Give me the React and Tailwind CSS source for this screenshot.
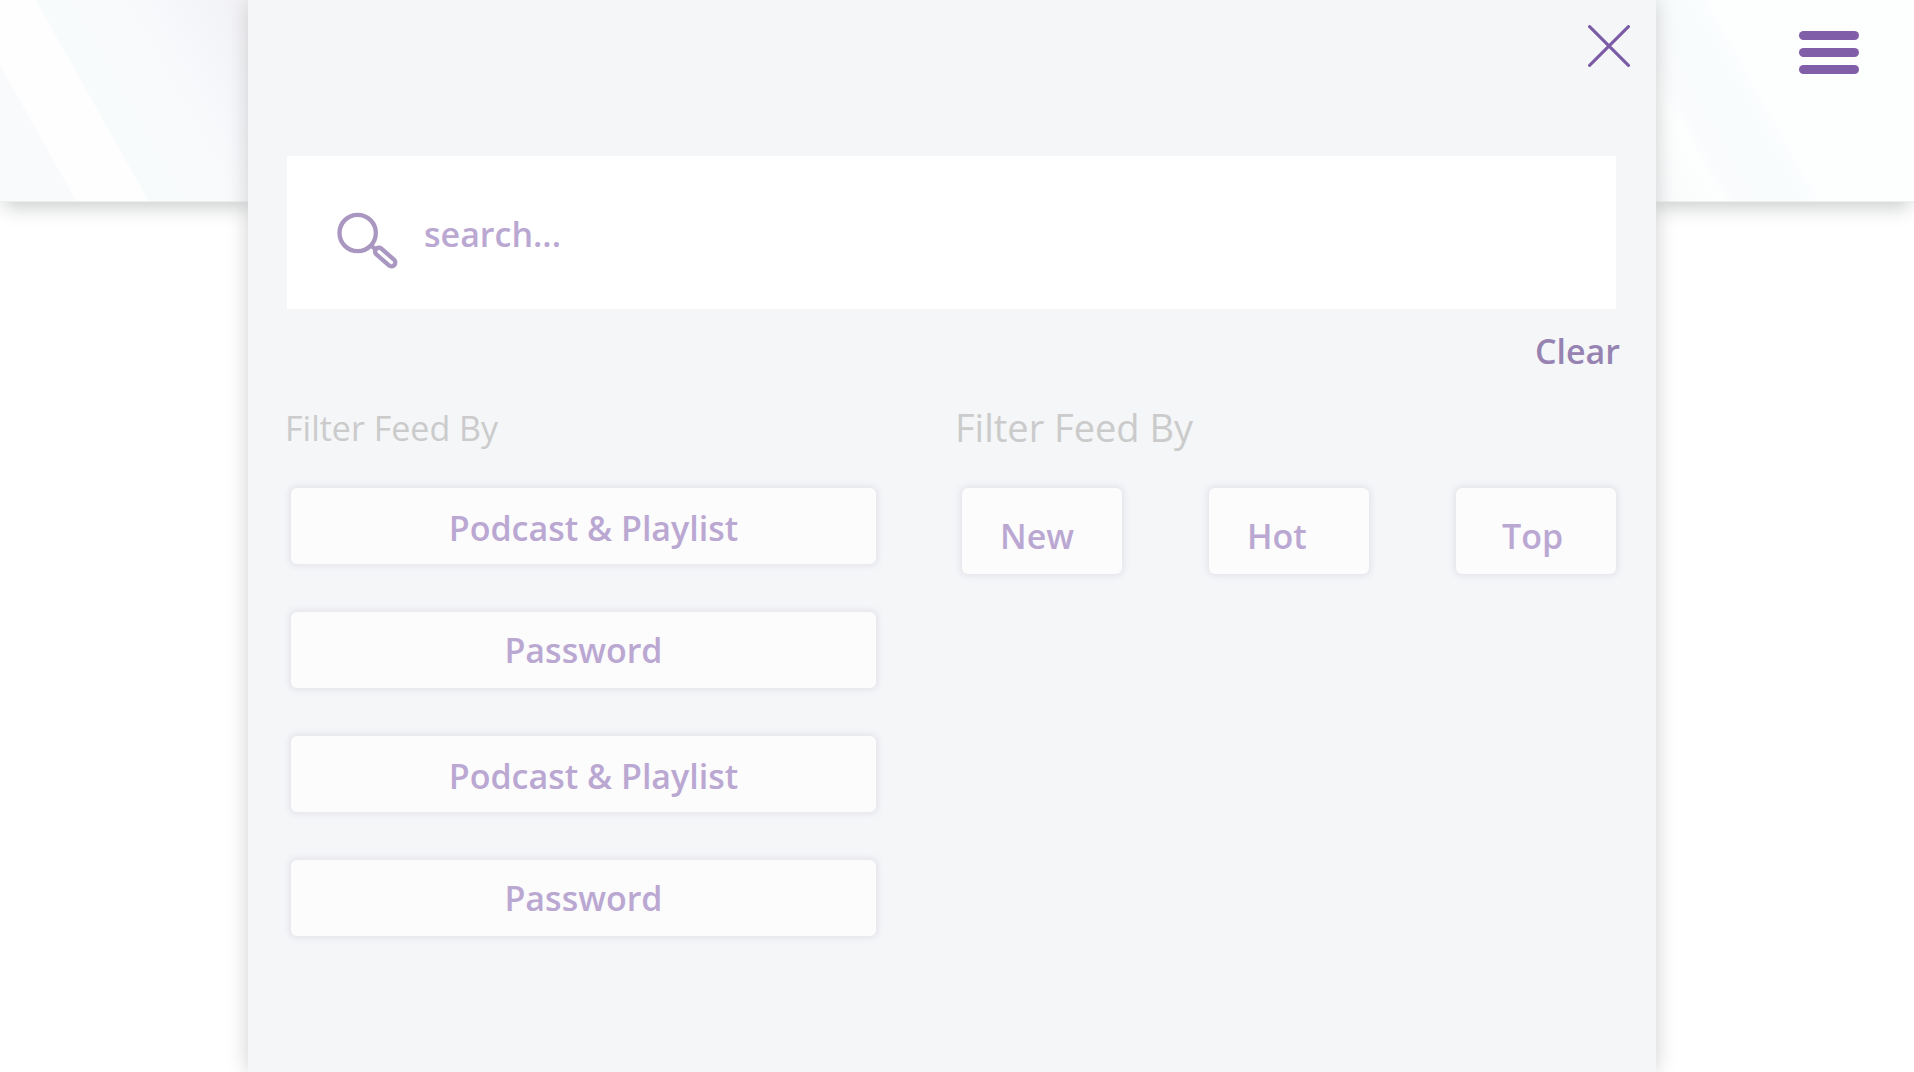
const feedTypes = [
  { id: 1, label: "Podcast & Playlist", pad: "pl-5 pt-1" },
  { id: 2, label: "Password", pad: "" },
  { id: 3, label: "Podcast & Playlist", pad: "pl-5 pt-1" },
  { id: 4, label: "Password", pad: "" },
];

const sortOrders = [
  { label: "New", pad: "pl-[38px]" },
  { label: "Hot", pad: "pl-[38px]" },
  { label: "Top", pad: "pl-[46px]" },
];

function MenuIcon() {
  return (
    <span className="flex w-[60px] flex-col gap-2">
      <span className="h-[9px] rounded-full bg-[#805fa8]" />
      <span className="h-[9px] rounded-full bg-[#805fa8]" />
      <span className="h-[9px] rounded-full bg-[#805fa8]" />
    </span>
  );
}

function CloseIcon() {
  return (
    <svg width="42" height="42" viewBox="0 0 42 42" fill="none" stroke="#7c5ba6" strokeWidth="3.1" strokeLinecap="round">
      <path d="M1.6 1.6 40.4 40.4M40.4 1.6 1.6 40.4" />
    </svg>
  );
}

function SearchIcon() {
  return (
    <svg width="61" height="57" viewBox="200 214 183 171" fill="none" stroke="#a997c2" strokeLinecap="round">
      <circle cx="262" cy="277" r="54.5" strokeWidth="13" />
      <path d="M303 315 316 327" strokeWidth="13" />
      <rect x="-12" y="-11.5" width="73" height="23" rx="11.5" strokeWidth="13" transform="translate(326 333) rotate(41)" />
    </svg>
  );
}

const card =
  "rounded-md bg-[#fcfcfd] font-semibold text-[#baa8d2] shadow-[0_0_6px_2px_#e4e3ea]";

export default function App() {
  return (
    <div className="relative min-h-screen overflow-hidden bg-white font-['Open_Sans','Noto_Sans',sans-serif]">
      <header className="flex h-[202px] items-start justify-end border-b border-[#eceef0] bg-[linear-gradient(60.7deg,#f8fafc_0px,#f8fafc_66px,#fefefe_67px,#fefefe_129px,#f8fbfc_130px,#f8f9fb_220px,#f5f6fa_260px,#f2f2f5_315px,#f1f1f4_1300px,#fdfefe_1500px,#fafbfc_1517px,#f8fcfd_1550px,#fbfdfe_1585px,#fdfefe_1587px)] pt-[31px] pr-[55px] shadow-[0_10px_18px_-4px_#cdd0cf]">
        <button type="button" aria-label="Open menu">
          <MenuIcon />
        </button>
      </header>

      <div className="absolute inset-0 pr-[258px] pl-[248px]">
        <section role="dialog" aria-label="Search and filter" className="min-h-full bg-[#f4f6f8] shadow-[0_0_20px_#cdcecf]">
          <div className="flex h-[156px] items-start justify-end pt-[25px] pr-[26px]">
            <button type="button" aria-label="Close">
              <CloseIcon />
            </button>
          </div>

          <div className="mr-10 ml-[39px]">
            <label className="flex h-[153px] items-center bg-white pt-4 pl-[50px]">
              <SearchIcon />
              <input
                type="text"
                aria-label="Search"
                placeholder="search..."
                className="ml-[26px] min-w-0 flex-1 pb-3 text-[34px] font-semibold text-[#baa8d2] outline-none placeholder:text-[#baa8d2] placeholder:opacity-100"
              />
            </label>

            <div className="flex justify-end pt-[19px]">
              <button type="button" className="-mr-1 text-[34px] leading-[46px] font-semibold text-[#9683b2]">
                Clear
              </button>
            </div>

            <div className="grid grid-cols-[589fr_659fr] gap-[81px] pt-6">
              <div>
                <h2 className="-ml-0.5 h-[90px] pt-1 text-[34px] leading-[52px] text-[#cbcbcb]">Filter Feed By</h2>
                <div className="flex flex-col gap-12 pl-1">
                  {feedTypes.map((item) => (
                    <button key={item.id} type="button" className={`${card} ${item.pad} h-[76px] text-[34px] leading-[46px]`}>
                      {item.label}
                    </button>
                  ))}
                </div>
              </div>
              <div>
                <h2 className="-ml-0.5 h-[90px] pt-1 text-[38px] leading-[50px] text-[#cbcbcb]">Filter Feed By</h2>
                <div className="flex justify-between pl-[5px]">
                  {sortOrders.map((item) => (
                    <button key={item.label} type="button" className={`${card} ${item.pad} h-[86px] w-[160px] pt-[10px] text-left text-[34px] leading-[46px]`}>
                      {item.label}
                    </button>
                  ))}
                </div>
              </div>
            </div>
          </div>
        </section>
      </div>
    </div>
  );
}
